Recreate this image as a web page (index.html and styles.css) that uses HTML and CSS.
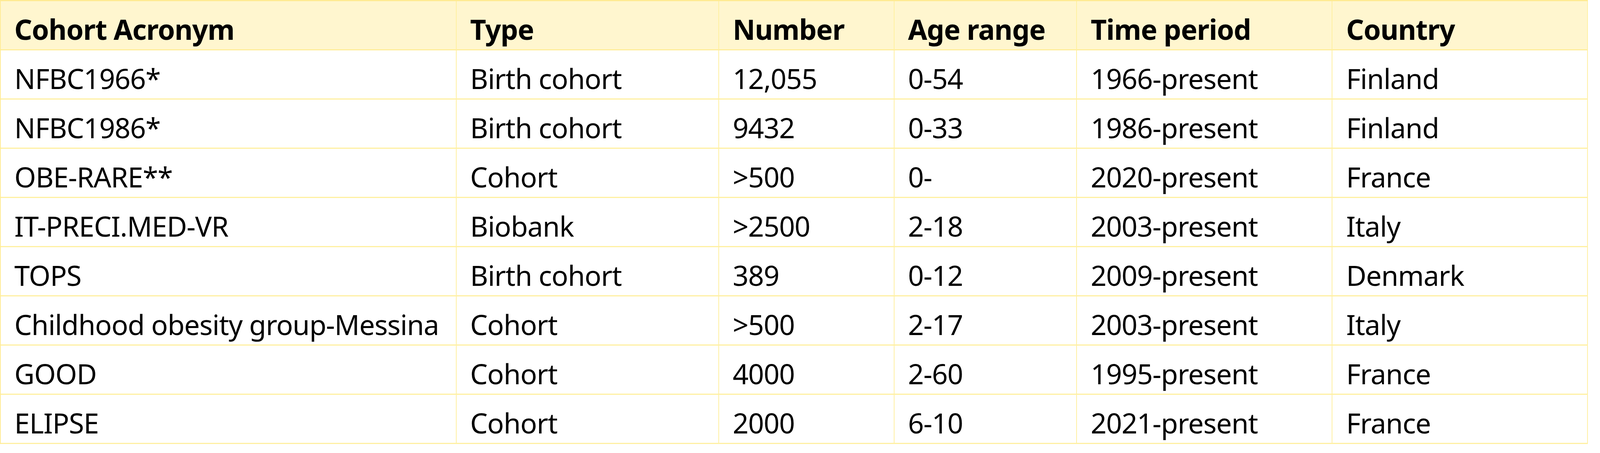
FILE: index.html
```html
<!DOCTYPE html>
<html lang="en">
<head>
<meta charset="utf-8">
<title>Cohorts</title>
<link rel="stylesheet" href="styles.css">
</head>
<body>
<div class="table">
  <div class="row head">
    <div class="cell">Cohort Acronym</div>
    <div class="cell">Type</div>
    <div class="cell">Number</div>
    <div class="cell">Age range</div>
    <div class="cell">Time period</div>
    <div class="cell">Country</div>
  </div>
  <div class="row">
    <div class="cell">NFBC1966*</div>
    <div class="cell">Birth cohort</div>
    <div class="cell">12,055</div>
    <div class="cell">0-54</div>
    <div class="cell">1966-present</div>
    <div class="cell">Finland</div>
  </div>
  <div class="row">
    <div class="cell">NFBC1986*</div>
    <div class="cell">Birth cohort</div>
    <div class="cell">9432</div>
    <div class="cell">0-33</div>
    <div class="cell">1986-present</div>
    <div class="cell">Finland</div>
  </div>
  <div class="row">
    <div class="cell">OBE-RARE**</div>
    <div class="cell">Cohort</div>
    <div class="cell">&gt;500</div>
    <div class="cell">0-</div>
    <div class="cell">2020-present</div>
    <div class="cell">France</div>
  </div>
  <div class="row">
    <div class="cell">IT-PRECI.MED-VR</div>
    <div class="cell">Biobank</div>
    <div class="cell">&gt;2500</div>
    <div class="cell">2-18</div>
    <div class="cell">2003-present</div>
    <div class="cell">Italy</div>
  </div>
  <div class="row">
    <div class="cell">TOPS</div>
    <div class="cell">Birth cohort</div>
    <div class="cell">389</div>
    <div class="cell">0-12</div>
    <div class="cell">2009-present</div>
    <div class="cell">Denmark</div>
  </div>
  <div class="row">
    <div class="cell">Childhood obesity group-Messina</div>
    <div class="cell">Cohort</div>
    <div class="cell">&gt;500</div>
    <div class="cell">2-17</div>
    <div class="cell">2003-present</div>
    <div class="cell">Italy</div>
  </div>
  <div class="row">
    <div class="cell">GOOD</div>
    <div class="cell">Cohort</div>
    <div class="cell">4000</div>
    <div class="cell">2-60</div>
    <div class="cell">1995-present</div>
    <div class="cell">France</div>
  </div>
  <div class="row">
    <div class="cell">ELIPSE</div>
    <div class="cell">Cohort</div>
    <div class="cell">2000</div>
    <div class="cell">6-10</div>
    <div class="cell">2021-present</div>
    <div class="cell">France</div>
  </div>
</div>
</body>
</html>
```

FILE: styles.css
```css
:root {
  /* one reference pixel across and down, so the table fills the 5185x1160 window */
  --ux: calc(100vw / 5185);
  --uy: calc(100vh / 1160);
}
* { box-sizing: border-box; }
html, body { margin: 0; padding: 0; background: #ffffff; }
body {
  font-family: "Noto Sans", "Open Sans", sans-serif;
  color: #000000;
  overflow: hidden;
}
.table {
  display: flex;
  flex-direction: column;
  width: calc(5146 * var(--ux));
  border-top: calc(3 * var(--uy)) solid #ffea92;
  border-left: calc(3 * var(--ux)) solid #ffeb96;
}
.row {
  display: grid;
  grid-template-columns:
    calc(1477 * var(--ux)) calc(851 * var(--ux)) calc(568 * var(--ux))
    calc(592 * var(--ux)) calc(828 * var(--ux)) calc(827 * var(--ux));
}
.cell {
  height: calc(126 * var(--uy));
  /* baseline sits 100 reference px below the top of the cell */
  padding: calc(100 * var(--uy) - 96.2 * var(--ux)) 0 0 calc(44 * var(--ux));
  font-size: calc(90 * var(--ux));
  line-height: 1.362;
  letter-spacing: calc(-1.4 * var(--ux));
  white-space: nowrap;
  border-right: calc(3 * var(--ux)) solid #fff0a2;
  border-bottom: calc(3 * var(--uy)) solid #fff0a2;
}
.head .cell {
  background: #fff6cf;
  font-weight: 700;
  border-bottom-color: #ffed9b;
}
```
